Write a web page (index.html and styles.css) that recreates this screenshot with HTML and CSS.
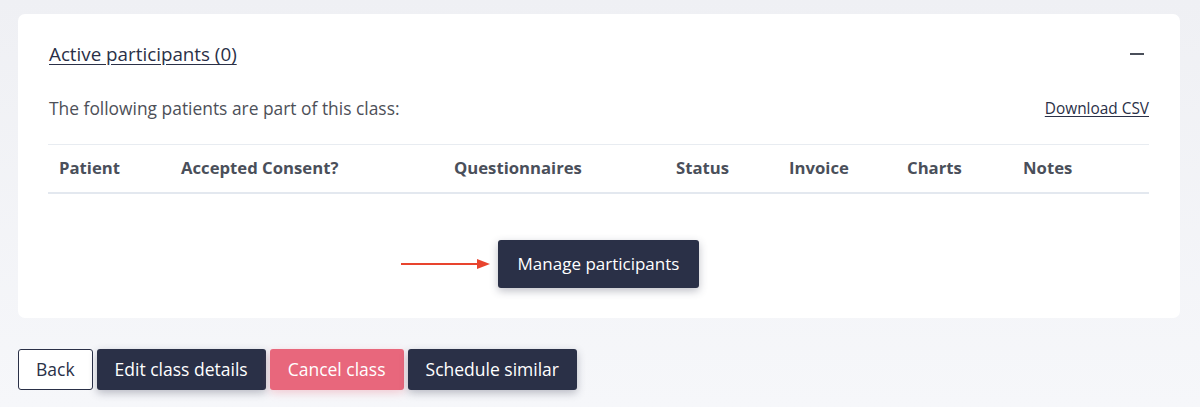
FILE: index.html
```html
<!DOCTYPE html>
<html lang="en">
<head>
  <meta charset="UTF-8">
  <meta name="viewport" content="width=device-width, initial-scale=1.0">
  <title>Class participants</title>
  <link rel="stylesheet" href="styles.css">
</head>
<body>

  <!-- Participants card -->
  <section class="card">
    <div class="card-header">
      <a href="#" class="card-title">Active participants (0)</a>
      <button class="collapse" aria-label="Collapse"><span class="minus"></span></button>
    </div>

    <div class="card-intro">
      <p>The following patients are part of this class:</p>
      <a href="#" class="csv-link">Download CSV</a>
    </div>

    <table class="participants">
      <thead>
        <tr>
          <th class="col-patient">Patient</th>
          <th class="col-consent">Accepted Consent?</th>
          <th class="col-questionnaires">Questionnaires</th>
          <th class="col-status">Status</th>
          <th class="col-invoice">Invoice</th>
          <th class="col-charts">Charts</th>
          <th class="col-notes">Notes</th>
        </tr>
      </thead>
      <tbody></tbody>
    </table>

    <div class="manage-row">
      <div class="manage-wrap">
        <!-- annotation arrow pointing at the button -->
        <svg class="arrow" width="90" height="12" viewBox="0 0 90 12">
          <line x1="0" y1="6" x2="78" y2="6" stroke="#e8442e" stroke-width="2"/>
          <polygon points="76,1 89,6 76,11" fill="#e8442e"/>
        </svg>
        <button class="btn btn-dark btn-large">Manage participants</button>
      </div>
    </div>
  </section>

  <!-- Page actions -->
  <div class="actions">
    <button class="btn btn-outline">Back</button>
    <button class="btn btn-dark">Edit class details</button>
    <button class="btn btn-danger">Cancel class</button>
    <button class="btn btn-dark">Schedule similar</button>
  </div>

</body>
</html>
```

FILE: styles.css
```css
* {
  box-sizing: border-box;
  margin: 0;
  padding: 0;
}

body {
  font-family: "Open Sans", Arial, sans-serif;
  color: #2a3047;
  background: linear-gradient(to bottom, #eff0f4, #f6f7fa);
  min-height: 100vh;
  padding: 14px 20px 0 18px;
}

.card {
  background: #fff;
  border-radius: 7px;
  padding: 28px 31px 30px 30px;
}

.card-header {
  display: flex;
  justify-content: space-between;
  align-items: center;
}

.card-title {
  font-size: 18.8px;
  line-height: 24px;
  font-weight: 500;
  color: #2a3047;
  text-decoration: underline;
  text-underline-offset: 3px;
  padding-left: 1px;
}

.collapse {
  border: none;
  background: none;
  width: 20px;
  height: 20px;
  display: flex;
  align-items: center;
  justify-content: center;
  margin-right: 2px;
  margin-top: -1px;
}

.minus {
  display: block;
  width: 14px;
  height: 2px;
  background: #4a4f5a;
}

.card-intro {
  display: flex;
  justify-content: space-between;
  align-items: center;
  margin-top: 30px;
}

.card-intro p {
  font-size: 17.4px;
  line-height: 24px;
  color: #4d5058;
  padding-left: 1px;
}

.csv-link {
  font-size: 15.4px;
  color: #2a3047;
  text-decoration: underline;
  text-underline-offset: 2px;
}

/* Table */
.participants {
  width: 100%;
  border-collapse: collapse;
  margin-top: 24px;
  table-layout: fixed;
}

.participants th {
  text-align: left;
  font-size: 16.7px;
  line-height: 24px;
  font-weight: 700;
  color: #4a4f5a;
  padding: 11px 11px 12px;
  border-top: 1px solid #e8ecf1;
  border-bottom: 2px solid #e3e8ef;
}

.col-patient { width: 122px; }
.col-consent { width: 273px; }
.col-questionnaires { width: 222px; }
.col-status { width: 113px; }
.col-invoice { width: 118px; }
.col-charts { width: 116px; }
.col-notes { width: auto; }

.manage-row {
  display: flex;
  justify-content: center;
  margin-top: 46px;
}

.manage-wrap {
  position: relative;
}

.arrow {
  position: absolute;
  right: 100%;
  top: 50%;
  margin-top: -6px;
  margin-right: 7px;
  display: block;
}

/* Buttons */
.btn {
  font-family: inherit;
  font-size: 17.5px;
  line-height: 24px;
  border-radius: 3px;
  padding: 7px 17px 8px;
  border: 1px solid transparent;
  cursor: pointer;
}

.btn-dark {
  background: #2a3047;
  color: #fff;
  box-shadow: 0 3px 8px rgba(42, 48, 71, 0.3);
}

.btn-large {
  font-size: 17px;
  padding: 11px 19px;
}

.btn-outline {
  background: #fff;
  color: #2a3047;
  border-color: #2a3047;
}

.btn-danger {
  background: #e8677c;
  color: #fff;
  box-shadow: 0 3px 8px rgba(232, 103, 124, 0.3);
}

.actions {
  display: flex;
  gap: 4px;
  margin-top: 31px;
}
```
